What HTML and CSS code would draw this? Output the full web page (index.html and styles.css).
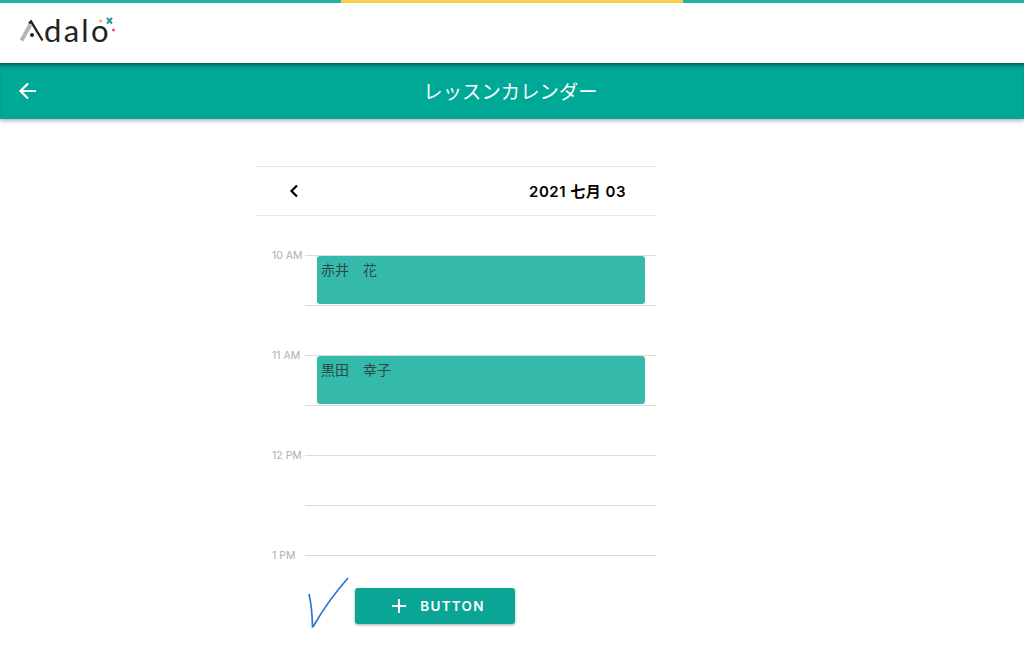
FILE: index.html
```html
<!DOCTYPE html>
<html lang="ja">
<head>
<meta charset="UTF-8">
<meta name="viewport" content="width=device-width, initial-scale=1.0">
<title>レッスンカレンダー</title>
<link rel="stylesheet" href="styles.css">
</head>
<body>

<div class="progress">
    <span></span>
    <span class="current"></span>
    <span></span>
</div>

<div class="logo-bar">
    <div class="logo">
        <svg class="logo-a" width="25" height="24" viewBox="0 0 25 24">
            <line x1="2.500" y1="21.500" x2="11.500" y2="5.500" stroke="#b5b5b5" stroke-width="4"/>
            <path d="M10 4.500 L12 2.500 L23.500 21.500" fill="none" stroke="#222" stroke-width="2.400"/>
            <circle cx="13" cy="16" r="2" fill="#222"/>
        </svg>
        <span class="logo-text">dalo</span>
        <svg class="logo-stars" width="22" height="22" viewBox="0 0 22 22">
            <circle cx="2.500" cy="5" r="1.500" fill="#f2b84b"/>
            <path d="M9 2 L14 7.500 M14 2 L9 7.500" stroke="#1d9c94" stroke-width="2"/>
            <circle cx="15.500" cy="14" r="1.500" fill="#e8505b"/>
        </svg>
    </div>
</div>

<header class="app-bar">
    <svg class="back" width="20" height="20" viewBox="0 0 20 20">
        <path d="M18 10 H3 M10 2.500 L2.500 10 L10 17.500" fill="none" stroke="#fff" stroke-width="2.200"/>
    </svg>
    <h1>レッスンカレンダー</h1>
</header>

<main class="calendar">
    <div class="cal-toolbar">
        <svg width="12" height="14" viewBox="0 0 12 14">
            <path d="M9 1.500 L3.500 7 L9 12.500" fill="none" stroke="#000" stroke-width="2.200"/>
        </svg>
        <span class="cal-date">2021 七月 03</span>
    </div>

    <div class="hours">
        <div class="hour">
            <span class="hour-label">10 AM</span>
            <div class="slot">
                <div class="event">赤井　花</div>
            </div>
        </div>
        <div class="hour">
            <span class="hour-label">11 AM</span>
            <div class="slot">
                <div class="event">黒田　幸子</div>
            </div>
        </div>
        <div class="hour">
            <span class="hour-label">12 PM</span>
            <div class="slot"></div>
        </div>
        <div class="hour last">
            <span class="hour-label">1 PM</span>
            <div class="slot"></div>
        </div>
    </div>

    <div class="actions">
        <svg class="check" width="42" height="52" viewBox="0 0 42 52">
            <path d="M2 17 C3 22 5 28 5.500 50 C6 50 6 50 6.500 49 C14 36 26 18 41 1" fill="none" stroke="#2a76d8" stroke-width="1.700"/>
        </svg>
        <button class="add-button">
            <svg width="16" height="16" viewBox="0 0 16 16">
                <path d="M8 1 V15 M1 8 H15" stroke="#fff" stroke-width="2"/>
            </svg>
            BUTTON
        </button>
    </div>
</main>

</body>
</html>
```

FILE: styles.css
```css
body {
    margin: 0;
    height: 664px;
    overflow: hidden;
    background-color: #fff;
    font-family: Inter, "Noto Sans CJK JP", sans-serif;
}

/* Top strip */
.progress {
    display: flex;
    height: 3px;
}

.progress span {
    flex: 1;
    background-color: #1fb3a5;
}

.progress .current {
    background-color: #f5cf4a;
}

/* Logo */
.logo-bar {
    height: 60px;
    padding-left: 19px;
}

.logo {
    display: flex;
    align-items: flex-start;
    padding-top: 11px;
}

.logo-a {
    margin-top: 5px;
}

.logo-text {
    font-family: Lato, sans-serif;
    font-size: 31px;
    line-height: 32px;
    letter-spacing: 2.300px;
    color: #222;
}

.logo-stars {
    margin-left: -13px;
    margin-top: 2px;
}

/* Teal header */
.app-bar {
    position: relative;
    display: flex;
    align-items: center;
    justify-content: center;
    height: 56px;
    padding-right: 3px;
    box-sizing: border-box;
    background-color: #00a896;
    box-shadow: 0 2px 4px rgba(0, 0, 0, 0.3), inset 0 5px 4px -3px rgba(0, 0, 0, 0.5);
}

.back {
    position: absolute;
    left: 18px;
    top: 18px;
}

.app-bar h1 {
    margin: 0;
    font-family: Roboto, "Noto Sans CJK JP", sans-serif;
    font-size: 19.300px;
    font-weight: 400;
    color: #fff;
    letter-spacing: 0.100px;
}

/* Calendar */
.calendar {
    width: 400px;
    margin: 47px 0 0 256px;
}

.cal-toolbar {
    display: flex;
    align-items: center;
    justify-content: space-between;
    height: 48px;
    padding: 0 30px 0 32px;
    border-top: 1px solid #e8e8ee;
    border-bottom: 1px solid #e8e8ee;
}

.cal-date {
    margin-bottom: 2px;
    font-size: 15px;
    font-weight: 600;
    letter-spacing: 0.500px;
    color: #000;
}

.hours {
    padding-top: 39px;
}

.hour {
    display: grid;
    grid-template-columns: 49px 1fr;
    height: 100px;
}

.hour.last {
    height: 33px;
}

.hour-label {
    margin: -6px 0 0 16px;
    font-size: 10.500px;
    line-height: 13px;
    color: #b0b0b0;
    white-space: nowrap;
}

.slot {
    position: relative;
    height: 51px;
    box-sizing: border-box;
    border-top: 1px solid #dcdcdc;
    border-bottom: 1px solid #dcdcdc;
}

.hour.last .slot {
    border-bottom: none;
}

.event {
    position: absolute;
    top: 0;
    left: 12px;
    right: 11px;
    height: 48px;
    box-sizing: border-box;
    padding: 5px 4px;
    background-color: #35b9ab;
    border-radius: 3px;
    font-size: 14px;
    line-height: 18px;
    color: #2c4a46;
}

/* Bottom button */
.actions {
    display: flex;
    align-items: flex-start;
    padding-left: 51px;
}

.check {
    margin: -11px 0 0 0;
}

.add-button {
    display: flex;
    align-items: center;
    justify-content: center;
    gap: 13px;
    width: 160px;
    height: 36px;
    margin-left: 6px;
    padding: 0 0 0 6px;
    border: none;
    border-radius: 3px;
    background-color: #0aa594;
    box-shadow: 0 1px 3px rgba(0, 0, 0, 0.35);
    color: #fff;
    font-family: Inter, sans-serif;
    font-size: 13.500px;
    font-weight: 600;
    letter-spacing: 1.250px;
}
```
